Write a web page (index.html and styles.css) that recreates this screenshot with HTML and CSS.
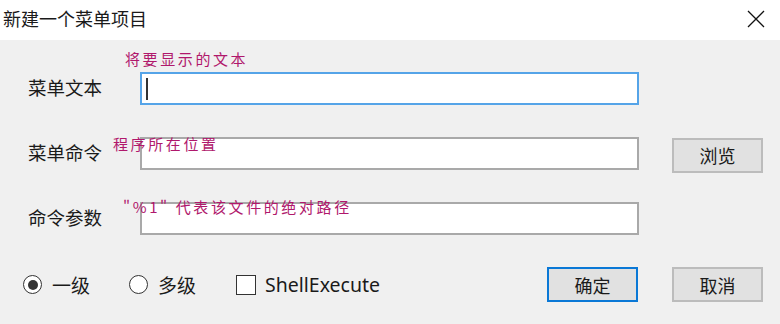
FILE: index.html
```html
<!DOCTYPE html>
<html lang="zh">
<head>
  <meta charset="UTF-8">
  <title>新建一个菜单项目</title>
  <link rel="stylesheet" href="styles.css">
</head>
<body>
  <div class="titlebar">
    <span class="title">新建一个菜单项目</span>
    <span class="close">
      <svg width="18" height="18" viewBox="0 0 18 18"><path d="M1 1L17 17M17 1L1 17" stroke="#111" stroke-width="1.3" fill="none"/></svg>
    </span>
  </div>

  <div class="dialog">
    <div class="form-row">
      <span class="label">菜单文本</span>
      <div class="input focused"><span class="caret"></span></div>
      <span class="hint hint-name">将要显示的文本</span>
    </div>
    <div class="form-row">
      <span class="label">菜单命令</span>
      <div class="input"></div>
      <button class="btn btn-browse">浏览</button>
      <span class="hint hint-cmd">程序所在位置</span>
    </div>
    <div class="form-row">
      <span class="label">命令参数</span>
      <div class="input"></div>
      <span class="hint hint-args">"%1" 代表该文件的绝对路径</span>
    </div>

    <div class="bottom-row">
      <div class="options">
        <label class="opt opt-one"><span class="radio checked"></span>一级</label>
        <label class="opt opt-multi"><span class="radio"></span>多级</label>
        <label class="opt"><span class="checkbox"></span><span class="latin">ShellExecute</span></label>
      </div>
      <div class="actions">
        <button class="btn btn-ok">确定</button>
        <button class="btn">取消</button>
      </div>
    </div>
  </div>
</body>
</html>
```

FILE: styles.css
```css
* {
  box-sizing: border-box;
}
body {
  margin: 0;
  width: 780px;
  height: 324px;
  overflow: hidden;
  background: #f0f0f0;
  font-family: "Noto Sans CJK SC", "Noto Sans", sans-serif;
  color: #1a1a1a;
}
.titlebar {
  height: 40px;
  background: #ffffff;
  display: flex;
  align-items: center;
  justify-content: space-between;
  padding: 0 15px 0 3px;
}
.title {
  font-size: 18px;
  margin-top: -4px;
}
.close {
  display: flex;
  margin-top: -2px;
}
.dialog {
  padding: 32px 17px 0 28px;
}
.form-row {
  position: relative;
  display: flex;
  align-items: center;
  height: 33px;
  margin-bottom: 32px;
}
.label {
  width: 112px;
  font-size: 18.5px;
  margin-top: -4px;
}
.input {
  width: 499px;
  height: 33px;
  background: #ffffff;
  border: 2px solid #a9a9a9;
  display: flex;
  align-items: center;
  padding-left: 4px;
}
.input.focused {
  border-color: #55a4e8;
}
.caret {
  width: 2px;
  height: 22px;
  background: #333;
}
.hint {
  position: absolute;
  color: #b0186c;
  font-size: 15px;
  font-weight: 400;
  letter-spacing: 2.6px;
  white-space: nowrap;
}
.hint-name {
  left: 97px;
  top: -24px;
}
.hint-cmd {
  left: 85px;
  top: -4px;
}
.hint-args {
  left: 95px;
  top: -6px;
}
.btn {
  width: 91px;
  height: 35px;
  background: #e1e1e1;
  border: 2px solid #bcbcbc;
  font-family: "Noto Sans CJK SC", sans-serif;
  font-size: 18px;
  color: #1a1a1a;
  padding: 0;
}
.btn-browse {
  margin-left: 33px;
  margin-top: 3px;
}
.btn-ok {
  border-color: #0a78d6;
}
.bottom-row {
  display: flex;
  justify-content: space-between;
  align-items: center;
  margin-left: -5px;
}
.options {
  display: flex;
  align-items: center;
}
.opt {
  display: flex;
  align-items: center;
  font-size: 19px;
}
.opt-one {
  margin-right: 39px;
}
.opt-multi {
  margin-right: 40px;
}
.radio {
  width: 19px;
  height: 19px;
  border: 1.5px solid #333;
  border-radius: 50%;
  background: #ffffff;
  margin-right: 10px;
  display: flex;
  align-items: center;
  justify-content: center;
}
.radio.checked::after {
  content: "";
  width: 10px;
  height: 10px;
  border-radius: 50%;
  background: #333;
}
.checkbox {
  width: 20px;
  height: 20px;
  border: 1.5px solid #333;
  background: #ffffff;
  margin-right: 9px;
}
.latin {
  font-family: "Noto Sans", sans-serif;
  font-size: 19.5px;
}
.actions {
  display: flex;
  gap: 34px;
}
```
